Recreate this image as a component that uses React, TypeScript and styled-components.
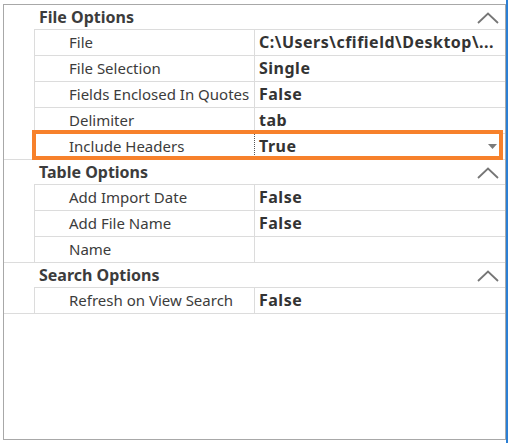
import React from "react";
import styled, { createGlobalStyle } from "styled-components";

const Global = createGlobalStyle`
  html, body { margin: 0; padding: 0; background: #ffffff; }
  body { font-family: "Noto Sans", "Open Sans", sans-serif; }
`;

const Page = styled.div`
  display: flex;
  width: 508px;
  height: 443px;
`;

const Area = styled.div`
  padding: 4px 0 0 3px;
`;

const Splitter = styled.div`
  width: 2px;
  height: 443px;
  background: #2b7fd4;
`;

const Panel = styled.div`
  box-sizing: border-box;
  width: 503px;
  height: 436px;
  border: 1px solid #a8a8a8;
  background: #fff;
`;

const Section = styled.div`
  border-bottom: 1px solid #dcdcdc;
`;

const Header = styled.div`
  height: 24px;
  display: flex;
  align-items: center;
  justify-content: space-between;
  padding: 0 6px 0 35px;
  font-size: 16px;
  font-weight: 700;
  color: #3c3c3c;
`;

const Chevron = styled.svg`
  width: 22px;
  height: 12px;
  margin-top: 1px;
`;

const Row = styled.div`
  position: relative;
  margin-left: 30px;
  height: 25px;
  border-top: 1px solid #dcdcdc;
  border-left: 1px solid #dcdcdc;
  display: grid;
  grid-template-columns: 220px 1fr;
  font-size: 15px;
`;

const Label = styled.div<{ $focused?: boolean }>`
  box-sizing: border-box;
  border-right: 1px ${(p) => (p.$focused ? "dotted #555" : "solid #dcdcdc")};
  padding-left: 34px;
  line-height: 25px;
  color: #3c3c3c;
  white-space: nowrap;
  overflow: hidden;
`;

const Value = styled.div`
  display: flex;
  align-items: center;
  justify-content: space-between;
  padding: 0 7px 0 4px;
  line-height: 25px;
  font-size: 16px;
  letter-spacing: 0.5px;
  font-weight: 700;
  color: #333;
  white-space: nowrap;
  overflow: hidden;
`;

const Highlight = styled.div`
  position: absolute;
  left: -3px;
  top: -4px;
  right: 2px;
  bottom: -1px;
  border: 4px solid #f7812b;
  pointer-events: none;
`;

const Caret = styled.svg`
  width: 9px;
  height: 5px;
  margin-right: 1px;
`;

type Item = { label: string; value: string; selected?: boolean };
type Cat = { title: string; items: Item[] };

const data: Cat[] = [
  {
    title: "File Options",
    items: [
      { label: "File", value: "C:\\Users\\cfifield\\Desktop\\..." },
      { label: "File Selection", value: "Single" },
      { label: "Fields Enclosed In Quotes", value: "False" },
      { label: "Delimiter", value: "tab" },
      { label: "Include Headers", value: "True", selected: true },
    ],
  },
  {
    title: "Table Options",
    items: [
      { label: "Add Import Date", value: "False" },
      { label: "Add File Name", value: "False" },
      { label: "Name", value: "" },
    ],
  },
  {
    title: "Search Options",
    items: [{ label: "Refresh on View Search", value: "False" }],
  },
];

const ChevronUp = () => (
  <Chevron viewBox="0 0 22 12">
    <path d="M1 11 L11 1.5 L21 11" fill="none" stroke="#767676" strokeWidth="1.8" />
  </Chevron>
);

export default function App() {
  return (
    <Page>
      <Global />
      <Area>
        <Panel>
          {data.map((cat) => (
            <Section key={cat.title}>
              <Header>
                <span>{cat.title}</span>
                <ChevronUp />
              </Header>
              {cat.items.map((it) => (
                <Row key={it.label}>
                  <Label $focused={it.selected}>{it.label}</Label>
                  <Value>
                    <span>{it.value}</span>
                    {it.selected && (
                      <Caret viewBox="0 0 9 5">
                        <path d="M0 0 H9 L4.5 5 Z" fill="#7b7b7b" />
                      </Caret>
                    )}
                  </Value>
                  {it.selected && <Highlight />}
                </Row>
              ))}
            </Section>
          ))}
        </Panel>
      </Area>
      <Splitter />
    </Page>
  );
}
